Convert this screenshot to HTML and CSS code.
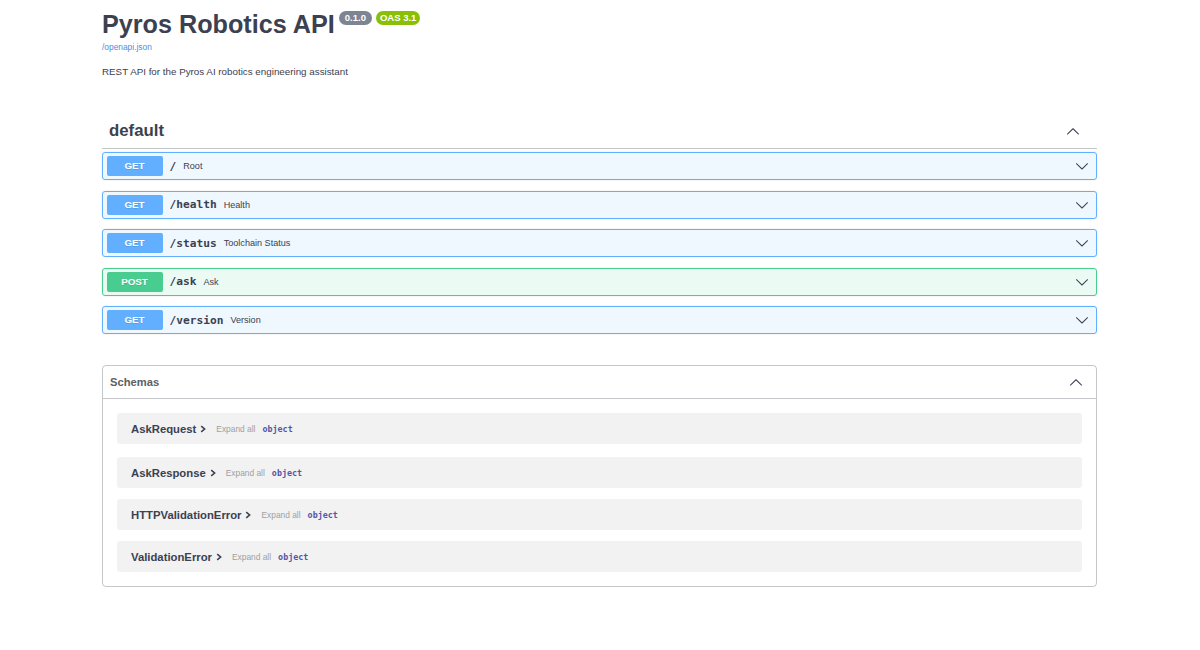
FILE: index.html
```html
<!DOCTYPE html>
<html lang="en">
<head>
<meta charset="utf-8">
<title>Pyros Robotics API</title>
<link rel="stylesheet" href="styles.css">
</head>
<body>
<div class="wrapper">
  <header class="info">
    <div class="title-row">
      <h1 class="title">Pyros Robotics API</h1>
      <span class="badge badge-version">0.1.0</span>
      <span class="badge badge-oas">OAS 3.1</span>
    </div>
    <a class="spec-link" href="#">/openapi.json</a>
    <p class="description">REST API for the Pyros AI robotics engineering assistant</p>
  </header>

  <section class="tag-section">
    <h3 class="tag">
      <span class="tag-name">default</span>
      <svg class="tag-arrow" viewBox="0 0 20 20" width="14" height="14"><path d="M17.418 14.908c.272.268.709.268.979 0s.271-.701 0-.969l-7.908-7.83c-.27-.268-.707-.268-.979 0l-7.908 7.83c-.27.268-.27.701 0 .969.271.268.709.268.979 0L10 7.767l7.418 7.141z"/></svg>
    </h3>

    <div class="op op-get">
      <span class="method">GET</span>
      <span class="path">/</span>
      <span class="op-desc">Root</span>
      <svg class="op-arrow" viewBox="0 0 20 20" width="14" height="14"><path d="M17.418 6.109c.272-.268.709-.268.979 0s.271.701 0 .969l-7.908 7.83c-.27.268-.707.268-.979 0l-7.908-7.830c-.27-.268-.27-.701 0-.969.271-.268.709-.268.979 0L10 13.25l7.418-7.141z"/></svg>
    </div>
    <div class="op op-get">
      <span class="method">GET</span>
      <span class="path">/health</span>
      <span class="op-desc">Health</span>
      <svg class="op-arrow" viewBox="0 0 20 20" width="14" height="14"><path d="M17.418 6.109c.272-.268.709-.268.979 0s.271.701 0 .969l-7.908 7.83c-.27.268-.707.268-.979 0l-7.908-7.83c-.27-.268-.27-.701 0-.969.271-.268.709-.268.979 0L10 13.25l7.418-7.141z"/></svg>
    </div>
    <div class="op op-get">
      <span class="method">GET</span>
      <span class="path">/status</span>
      <span class="op-desc">Toolchain Status</span>
      <svg class="op-arrow" viewBox="0 0 20 20" width="14" height="14"><path d="M17.418 6.109c.272-.268.709-.268.979 0s.271.701 0 .969l-7.908 7.83c-.27.268-.707.268-.979 0l-7.908-7.83c-.27-.268-.27-.701 0-.969.271-.268.709-.268.979 0L10 13.25l7.418-7.141z"/></svg>
    </div>
    <div class="op op-post">
      <span class="method">POST</span>
      <span class="path">/ask</span>
      <span class="op-desc">Ask</span>
      <svg class="op-arrow" viewBox="0 0 20 20" width="14" height="14"><path d="M17.418 6.109c.272-.268.709-.268.979 0s.271.701 0 .969l-7.908 7.83c-.27.268-.707.268-.979 0l-7.908-7.83c-.27-.268-.27-.701 0-.969.271-.268.709-.268.979 0L10 13.25l7.418-7.141z"/></svg>
    </div>
    <div class="op op-get">
      <span class="method">GET</span>
      <span class="path">/version</span>
      <span class="op-desc">Version</span>
      <svg class="op-arrow" viewBox="0 0 20 20" width="14" height="14"><path d="M17.418 6.109c.272-.268.709-.268.979 0s.271.701 0 .969l-7.908 7.83c-.27.268-.707.268-.979 0l-7.908-7.83c-.27-.268-.27-.701 0-.969.271-.268.709-.268.979 0L10 13.25l7.418-7.141z"/></svg>
    </div>
  </section>

  <section class="models">
    <h4 class="models-head">
      <span>Schemas</span>
      <svg class="models-arrow" viewBox="0 0 20 20" width="14" height="14"><path d="M17.418 14.908c.272.268.709.268.979 0s.271-.701 0-.969l-7.908-7.83c-.27-.268-.707-.268-.979 0l-7.908 7.83c-.27.268-.27.701 0 .969.271.268.709.268.979 0L10 7.767l7.418 7.141z"/></svg>
    </h4>
    <div class="models-body">
      <div class="model-row">
        <span class="model-title">AskRequest</span>
        <svg class="model-chev" viewBox="0 0 6 8" width="6" height="8"><path d="M1.2 1.2 L4.6 4 L1.2 6.8" fill="none" stroke="#3b4151" stroke-width="1.6"/></svg>
        <span class="expand">Expand all</span>
        <span class="type">object</span>
      </div>
      <div class="model-row">
        <span class="model-title">AskResponse</span>
        <svg class="model-chev" viewBox="0 0 6 8" width="6" height="8"><path d="M1.2 1.2 L4.6 4 L1.2 6.8" fill="none" stroke="#3b4151" stroke-width="1.6"/></svg>
        <span class="expand">Expand all</span>
        <span class="type">object</span>
      </div>
      <div class="model-row">
        <span class="model-title">HTTPValidationError</span>
        <svg class="model-chev" viewBox="0 0 6 8" width="6" height="8"><path d="M1.2 1.2 L4.6 4 L1.2 6.8" fill="none" stroke="#3b4151" stroke-width="1.6"/></svg>
        <span class="expand">Expand all</span>
        <span class="type">object</span>
      </div>
      <div class="model-row">
        <span class="model-title">ValidationError</span>
        <svg class="model-chev" viewBox="0 0 6 8" width="6" height="8"><path d="M1.2 1.2 L4.6 4 L1.2 6.8" fill="none" stroke="#3b4151" stroke-width="1.6"/></svg>
        <span class="expand">Expand all</span>
        <span class="type">object</span>
      </div>
    </div>
  </section>
</div>
</body>
</html>
```

FILE: styles.css
```css
html, body {
  margin: 0;
  padding: 0;
  background: #ffffff;
}

body {
  font-family: "Liberation Sans", Arial, sans-serif;
  color: #3b4151;
}

.wrapper {
  width: 995px;
  margin-left: 102px;
}

/* ---------- info ---------- */
.info {
  padding-top: 9px;
}

.title-row {
  display: flex;
  align-items: flex-start;
}

.title {
  margin: 0;
  font-size: 25.2px;
  line-height: 30px;
  font-weight: 700;
  color: #3b4151;
}

.badge {
  margin-top: 2px;
  height: 14px;
  line-height: 14px;
  padding: 0 5px;
  border-radius: 7px;
  font-size: 9.5px;
  font-weight: 700;
  color: #ffffff;
}

.badge-version {
  margin-left: 4px;
  padding: 0 6px;
  background: #7d8492;
}

.badge-oas {
  margin-left: 4px;
  padding: 0 4px;
  background: #89bf04;
}

.spec-link {
  display: block;
  margin-top: 3px;
  font-size: 8.4px;
  line-height: 10px;
  color: #4990e2;
  text-decoration: none;
}

.description {
  margin: 13px 0 0;
  font-size: 9.8px;
  line-height: 14px;
  color: #3b4151;
}

/* ---------- tag ---------- */
.tag-section {
  margin-top: 36px;
}

.tag {
  display: flex;
  align-items: center;
  justify-content: space-between;
  margin: 0 0 3px;
  padding: 6px 17px 7px 7px;
  line-height: 20px;
  font-size: 16.8px;
  font-weight: 700;
  color: #3b4151;
  border-bottom: 1px solid rgba(59, 65, 81, 0.3);
}

.tag-arrow,
.models-arrow,
.op-arrow {
  fill: #3b4151;
  flex: none;
}

/* ---------- operations ---------- */
.op {
  box-sizing: border-box;
  height: 28px;
  display: flex;
  align-items: center;
  padding: 0 3.5px;
  margin-bottom: 10.5px;
  border: 1px solid;
  border-radius: 3px;
  box-shadow: 0 0 2px rgba(0, 0, 0, 0.12);
}

.op-get {
  border-color: #61affe;
  background: rgba(97, 175, 254, 0.1);
}

.op-post {
  border-color: #49cc90;
  background: rgba(73, 204, 144, 0.1);
}

.method {
  box-sizing: border-box;
  width: 56px;
  height: 20px;
  line-height: 20px;
  text-align: center;
  border-radius: 2px;
  font-size: 9.8px;
  font-weight: 700;
  color: #ffffff;
  text-shadow: 0 1px 0 rgba(0, 0, 0, 0.1);
  flex: none;
}

.op-get .method {
  background: #61affe;
}

.op-post .method {
  background: #49cc90;
}

.path {
  padding: 0 7px;
  font-family: "DejaVu Sans Mono", "Liberation Mono", monospace;
  font-size: 11.2px;
  font-weight: 700;
  color: #3b4151;
}

.op-desc {
  flex: 1;
  font-size: 9.1px;
  color: #3b4151;
}

.op-arrow {
  margin-right: 4px;
}

/* ---------- models ---------- */
.models {
  margin-top: 31px;
  border: 1px solid rgba(59, 65, 81, 0.3);
  border-radius: 4px;
}

.models-head {
  box-sizing: border-box;
  height: 33px;
  margin: 0;
  display: flex;
  align-items: center;
  justify-content: space-between;
  padding: 0 13.5px 0 7px;
  font-size: 11.2px;
  font-weight: 700;
  color: #606060;
  border-bottom: 1px solid rgba(59, 65, 81, 0.3);
}

.models-body {
  padding: 14px 14px 3px;
}

.model-row {
  box-sizing: border-box;
  height: 31px;
  display: flex;
  align-items: center;
  padding-left: 14px;
  margin-bottom: 11px;
  border-radius: 3px;
  background: rgba(0, 0, 0, 0.05);
}

.model-row:first-child {
  margin-bottom: 13px;
}

.model-title {
  font-size: 11.3px;
  font-weight: 700;
  color: #3b4151;
}

.model-chev {
  margin-left: 4px;
  flex: none;
}

.expand {
  margin-left: 10px;
  font-size: 8.4px;
  color: #a0a0a0;
}

.type {
  margin-left: 7px;
  font-family: "DejaVu Sans Mono", "Liberation Mono", monospace;
  font-size: 8.4px;
  font-weight: 700;
  color: #55a;
}
```
